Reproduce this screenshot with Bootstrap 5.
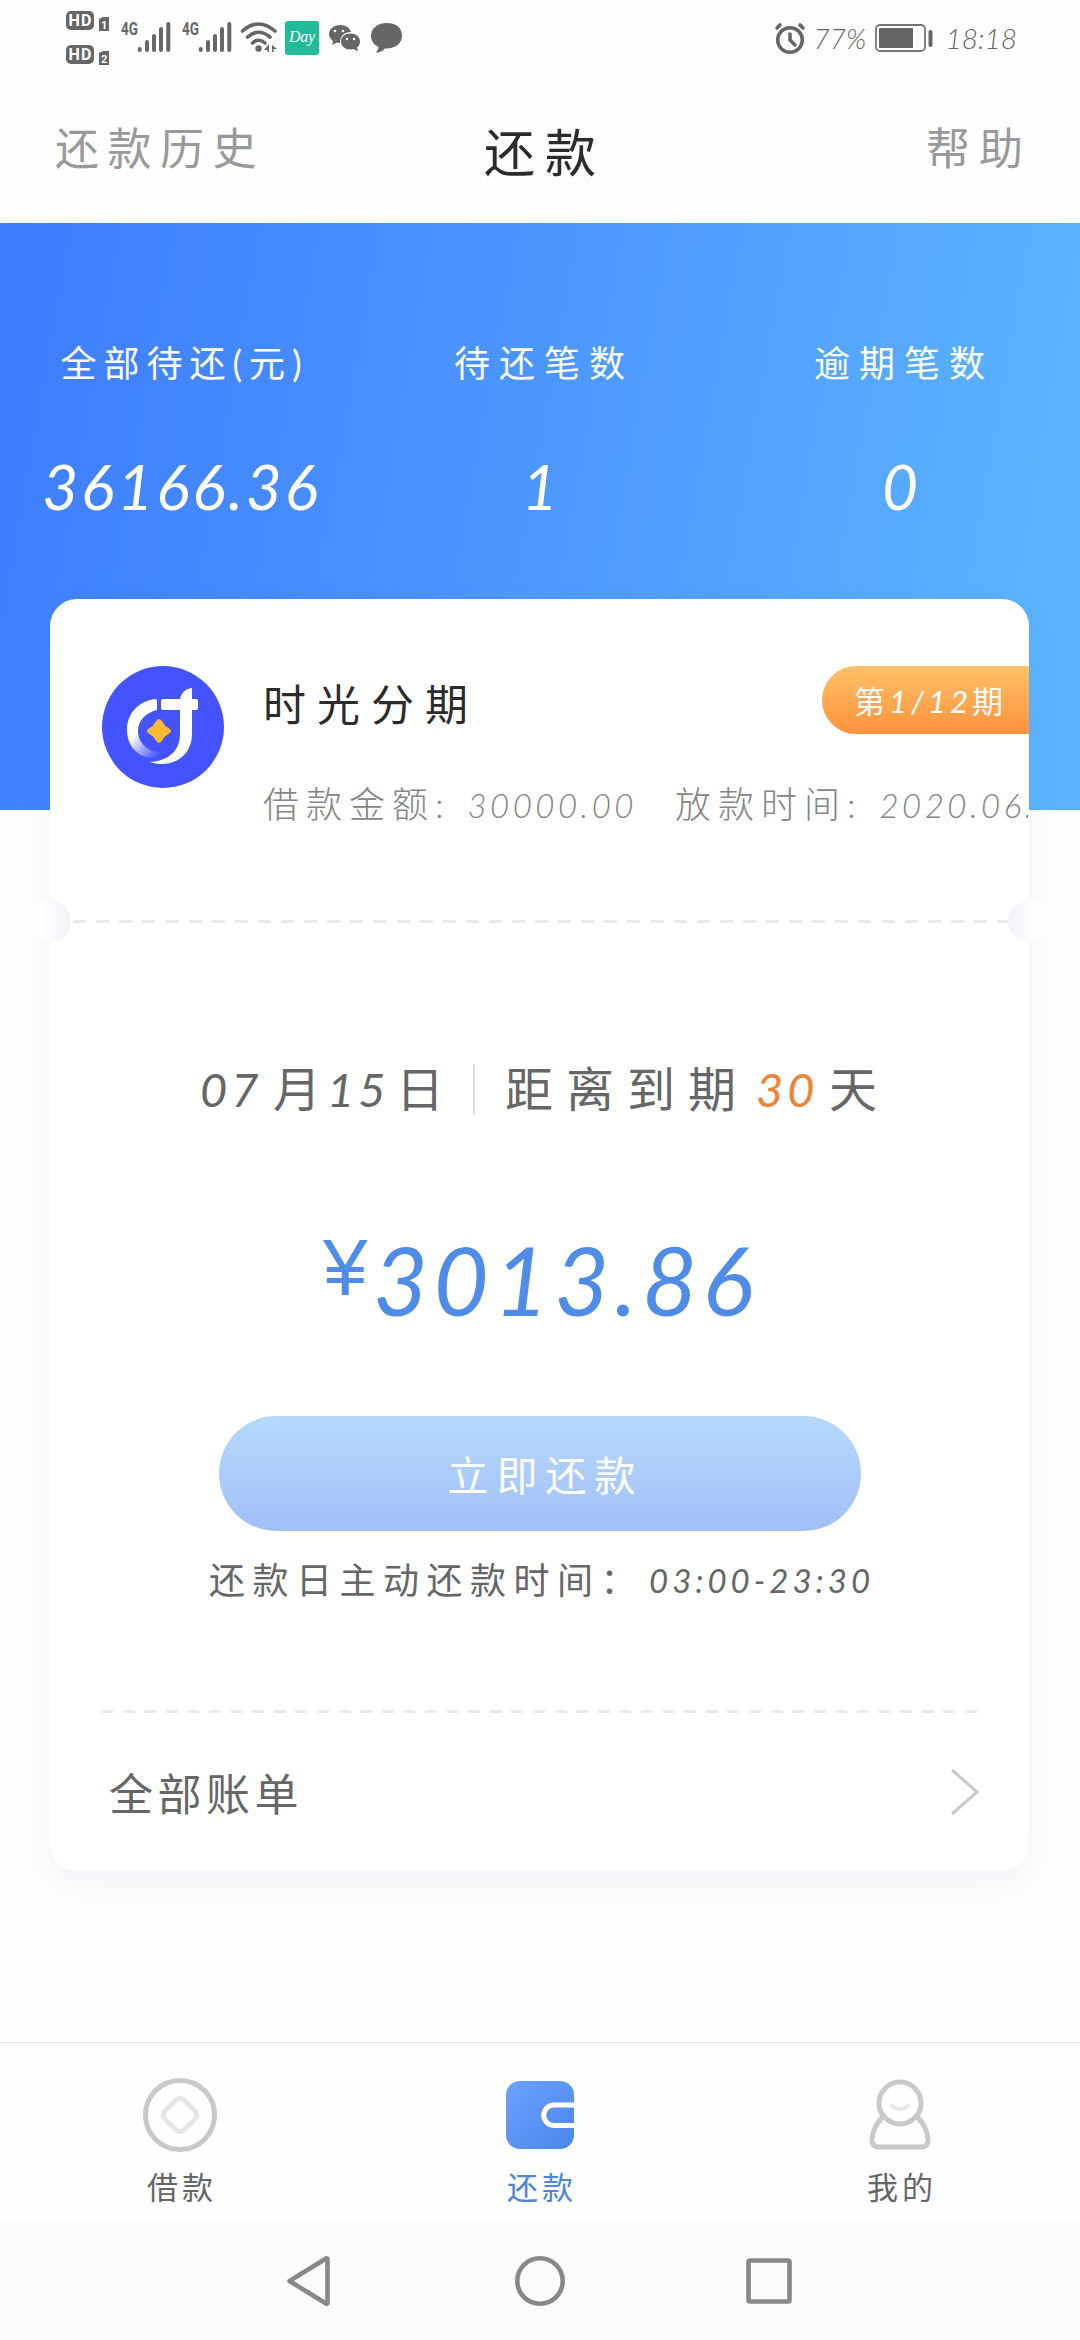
<!DOCTYPE html>
<html lang="zh-CN">
<head>
<meta charset="utf-8">
<meta name="viewport" content="width=device-width, initial-scale=1">
<title>还款</title>
<link href="https://cdn.jsdelivr.net/npm/bootstrap@5.3.0/dist/css/bootstrap.min.css" rel="stylesheet">
<style>
  body { font-family: Lato, "Noto Sans CJK SC", sans-serif; font-weight: 400; color: #666; background: #fefefe; width: 1080px; line-height: 1; overflow-x: hidden; }
  svg { display: block; flex: none; }
  .num { font-style: italic; }
  .status-bar { height: 76px; color: #666; }
  .status-left { padding-left: 65px; }
  .status-right { padding: 0 63px 0 0; font-size: 28px; font-weight: 300; }
  .battery-text { width: 69px; padding-left: 7px; }
  .clock-text { padding-left: 10px; }
  .app-header { height: 147px; color: #999; font-size: 44px; padding: 0 48px 0 55px; }
  .app-header > * { flex: 1 1 0; }
  .side-link { letter-spacing: 8.5px; padding-bottom: 3px; }
  .side-link.text-end { letter-spacing: 9px; }
  .page-title { font-size: 51px; letter-spacing: 10px; padding-left: 3px; padding-top: 5px; color: #2b2b2b; }
  .hero { height: 587px; background: linear-gradient(100deg, #3d7cff 0%, #4a93ff 42%, #5bb2ff 92%); color: #fff; }
  .stat-label { margin-top: 122px; height: 40px; font-size: 36px; letter-spacing: 9px; padding-left: 8px; }
  .stat-label.long { letter-spacing: 7px; padding-left: 9px; }
  .stat-num { margin-top: 70px; height: 73px; font-size: 62px; letter-spacing: 3px; padding-left: 3px; }
  .loan-card { width: 979px; height: 1272px; margin: -211px 0 0 50px; border: 0; border-radius: 27px; box-shadow: 0 12px 30px rgba(90,120,170,.09); }
  .loan-head { height: 321px; padding: 67px 0 0 52px; overflow: hidden; }
  .loan-text { padding-left: 39px; }
  .loan-name { font-size: 43px; letter-spacing: 11px; color: #2b2b2b; padding-top: 9px; }
  .term-pill { width: 207px; height: 68px; border-radius: 34px 0 0 34px; background: linear-gradient(#ffc168, #ff913d); color: #fff; font-size: 31px; letter-spacing: 4px; padding-left: 32px; padding-top: 2px; }
  .loan-meta { font-size: 36px; letter-spacing: 7px; color: #858585; width: 765px; overflow: hidden; margin-top: 44px; height: 52px; font-weight: 300; }
  .loan-meta .num { font-size: 33px; letter-spacing: 3.5px; }
  .meta-date { padding-left: 38px; }
  .dash-row { height: 3px; background: repeating-linear-gradient(90deg, #e9e9ea 0 13px, transparent 13px 23.1px); }
  .dash-row.lower { width: 878px; background: repeating-linear-gradient(90deg, #ebebeb 0 12px, transparent 12px 21.6px); }
  .notch { top: 301px; width: 42px; height: 42px; border-radius: 50%; }
  .notch-l { left: -21px; background: linear-gradient(90deg, #fefefe 30%, #f1f3f8); }
  .notch-r { right: -21px; background: linear-gradient(270deg, #fefefe 30%, #f1f3f8); }
  .due-row { height: 60px; margin-top: 136px; font-size: 48px; padding-left: 150px; }
  .due-row .num { font-size: 47px; letter-spacing: 4px; }
  .due-day { width: 73px; }
  .due-month { width: 54px; }
  .due-fifteen { width: 69px; }
  .due-sun { width: 77px; }
  .due-left { width: 281px; padding-left: 30px; letter-spacing: 13px; }
  .due-count { color: #ee8337; width: 73px; }
  .due-rule { width: 2px; height: 51px; background: #dedede; }
  .amount-row { height: 90px; margin-top: 115px; color: #4f8ce8; padding-left: 273px; }
  .yuan { font: 400 80px/80px "Liberation Sans", sans-serif; margin-top: -6px; width: 50px; }
  .amount { font-size: 95px; line-height: 90px; letter-spacing: 5.3px; }
  .pay-btn { width: 642px; height: 115px; border: 0; border-radius: 58px; background: linear-gradient(#b5d9fc, #a2bff8); color: #fff; font-size: 41px; letter-spacing: 8px; margin-top: 92px; padding: 4px 0 0 12px; }
  .pay-note { font-size: 36px; letter-spacing: 7.5px; height: 50px; margin-top: 24px; padding-left: 159px; }
  .pay-note-text { width: 440px; }
  .pay-note .num { font-size: 33px; letter-spacing: 4px; }
  .bill-row { height: 158px; padding: 0 50px 0 59px; font-size: 44px; letter-spacing: 4.5px; }
  .tab-bar { height: 180px; margin-top: 171px; border-top: 1px solid #e0e0e0; font-size: 31px; letter-spacing: 4px; }
  .tab-bar > a { flex: 1; padding-top: 34px; color: #666; text-decoration: none; }
  .tab-bar > a.active { color: #4d86d8; }
  .tab-label { margin-top: 15px; padding-left: 4px; }
  .sys-nav { height: 118px; background: #fbfbfb; padding-left: 283px; }
  .svg-label { font-family: Roboto, sans-serif; font-weight: 700; }
</style>
</head>
<body>
<div class="status-bar d-flex justify-content-between">
  <div class="status-left">
    <svg width="340" height="76" viewBox="65 0 340 76" fill="#666">
      <rect x="66" y="11" width="28" height="19" rx="5"/><rect x="66" y="45" width="28" height="19" rx="5"/>
      <g class="svg-label" font-size="16" fill="#fff"><text x="68.500" y="26.300" textLength="23">HD</text><text x="68.500" y="60.300" textLength="23">HD</text></g>
      <path d="M99 19l4-2h6v14H99zM99 53l4-2h6v14H99z"/>
      <g class="svg-label" font-size="11" fill="#fff"><text x="101" y="29">1</text><text x="101" y="63">2</text></g>
      <g class="svg-label" font-size="18"><text x="121" y="35" textLength="17" lengthAdjust="spacingAndGlyphs">4G</text><text x="182" y="35" textLength="17" lengthAdjust="spacingAndGlyphs">4G</text></g>
      <g stroke="#666" stroke-width="4" stroke-linecap="round"><path d="M139.700 49v1M147 42v8M154 36v14M161 29v21M168.300 24v26M200.700 49v1M208 42v8M215 36v14M222 29v21M229.300 24v26"/></g>
      <g fill="none" stroke="#666" stroke-width="3.600" stroke-linecap="round"><path d="M242.500 31Q258.500 17 275 31M247.500 37Q258.500 27.500 270 37M252.500 43Q258.500 37.500 265 43"/></g>
      <circle cx="258.500" cy="48.500" r="3.200"/><path d="M264 50l5-6v8h-1.500v-2zM272 45l5 4h-3.500v3H272z"/>
      <rect x="285" y="21" width="34" height="34" rx="3" fill="#22bb99"/>
      <text x="289" y="42" font-family="Liberation Serif" font-style="italic" font-size="16" textLength="26" fill="#fff">Day</text>
      <path d="M340 25c-6 0-11 4-11 9 0 3 2 5.500 4 7l-1 4 5-2.500q1.500.5 3 .5c0-7 4-11 11-11-1-4-5-7-11-7z"/>
      <path d="M350.500 33.500c-5.500 0-9.500 3.500-9.500 8s4 8 9.500 8l3-.5 4.500 2.500-1-4c2-1.500 3-3.500 3-6 0-4.500-4-8-9.500-8z"/>
      <g fill="#fff"><circle cx="335" cy="31" r="1.300"/><circle cx="343" cy="31" r="1.300"/><circle cx="347" cy="39" r="1.200"/><circle cx="354" cy="39" r="1.200"/></g>
      <path d="M386.500 23c-9 0-15.500 5.500-15.500 12.500 0 5.500 3 9 7.500 11.500 0 2-1 4-3 5.500 5 0 7.500-2 9.500-4 10 .5 17-5 17-13S395.500 23 386.500 23z"/>
    </svg>
  </div>
  <div class="status-right d-flex align-items-center">
    <svg width="32" height="34" viewBox="0 0 32 34" fill="none" stroke="#666" stroke-width="3.600" stroke-linecap="round"><circle cx="16" cy="19" r="12.300"/><path d="M16 13v6l5 5M3 7l3-3M29 7l-3-3"/></svg>
    <span class="num battery-text">77%</span>
    <svg width="60" height="30" viewBox="0 0 60 30"><rect x="1" y="2" width="49" height="26" rx="4" fill="none" stroke="#777" stroke-width="1.800"/><rect x="4" y="5" width="34" height="20" rx="1" fill="#666"/><rect x="53.500" y="7" width="4" height="17" rx="2" fill="#666"/></svg>
    <span class="num clock-text">18:18</span>
  </div>
</div>
<header class="app-header d-flex align-items-center">
  <span class="side-link">还款历史</span>
  <span class="page-title text-center">还款</span>
  <span class="side-link text-end">帮助</span>
</header>
<main>
  <section class="hero">
    <div class="row g-0 text-center">
      <div class="col-4"><div class="stat-label long">全部待还(元)</div><div class="stat-num num">36166.36</div></div>
      <div class="col-4"><div class="stat-label">待还笔数</div><div class="stat-num num">1</div></div>
      <div class="col-4"><div class="stat-label">逾期笔数</div><div class="stat-num num">0</div></div>
    </div>
  </section>
  <section class="card loan-card">
    <div class="loan-head d-flex">
      <svg width="122" height="122" viewBox="0 0 122 122">
        <defs><linearGradient id="tail" x1="0" y1="0" x2=".7" y2="1"><stop offset=".5" stop-color="#fff"/><stop offset="1" stop-color="#fff" stop-opacity="0"/></linearGradient></defs>
        <circle cx="61" cy="61" r="61" fill="#4353ff"/>
        <path d="M55 35v9C43 47 36 55 36 65c0 14 14 25 30 20-4 5-10 7-15 7C36 92 25 80 25 64c0-17 12-29 28-31q2 0 2 2z" fill="url(#tail)"/>
        <path d="M59 35q0-2 2-2h17c1-6 5-10 12-11v11h4q2 0 2 2v7q0 2-2 2h-4v24c0 18-13 30-30 30-5 0-9-1-12-2 18-1 30-11 30-28V44H61q-2 0-2-2z" fill="#fff"/>
        <path d="M57 53q2 0 3.500 3 2 4 6 6 5 3 0 6-4 2-6 6-3.500 6-7 0-2-4-6-6-5-3 0-6 4-2 6-6 1.500-3 3.500-3z" fill="#ffba30"/>
      </svg>
      <div class="loan-text flex-grow-1 overflow-hidden">
        <div class="d-flex justify-content-between">
          <div class="loan-name d-flex align-items-center">时光分期</div>
          <div class="term-pill d-flex align-items-center"><span>第<span class="num">1/12</span>期</span></div>
        </div>
        <div class="loan-meta d-flex align-items-center text-nowrap"><span>借款金额: <span class="num">30000.00</span></span><span class="meta-date">放款时间: <span class="num">2020.06.</span></span></div>
      </div>
    </div>
    <div class="dash-row"></div>
    <i class="notch notch-l position-absolute"></i><i class="notch notch-r position-absolute"></i>
    <div class="due-row d-flex align-items-center text-nowrap">
      <span class="num due-day">07</span><span class="due-month">月</span><span class="num due-fifteen">15</span><span class="due-sun">日</span>
      <i class="due-rule"></i>
      <span class="due-left">距离到期</span><span class="num due-count">30</span><span>天</span>
    </div>
    <div class="amount-row d-flex"><span class="yuan">¥</span><span class="amount num">3013.86</span></div>
    <button type="button" class="btn pay-btn align-self-center">立即还款</button>
    <div class="pay-note d-flex align-items-center text-nowrap"><span class="pay-note-text">还款日主动还款时间：</span><span class="num">03:00-23:30</span></div>
    <div class="dash-row lower align-self-center mt-auto"></div>
    <div class="bill-row d-flex align-items-center justify-content-between">
      <span class="pt-1">全部账单</span>
      <svg width="28" height="46" viewBox="0 0 28 46" fill="none" stroke="#c9c9c9" stroke-width="3"><path d="M1 1l25 22L1 45"/></svg>
    </div>
  </section>
</main>
<nav class="tab-bar d-flex text-center">
  <a href="#">
    <svg class="mx-auto" width="80" height="80" viewBox="0 0 80 80" fill="none"><circle cx="40" cy="38" r="34.500" stroke="#c8c8c8" stroke-width="5"/><rect x="26.500" y="24.500" width="27" height="27" rx="6" transform="rotate(45 40 38)" stroke="#e6e6e6" stroke-width="5"/></svg>
    <div class="tab-label">借款</div>
  </a>
  <a href="#" class="active">
    <svg class="mx-auto" width="80" height="80" viewBox="0 0 80 80"><defs><linearGradient id="wal" x1="0" y1="0" x2="1" y2="1"><stop stop-color="#6ba2ff"/><stop offset="1" stop-color="#4a86ea"/></linearGradient></defs><rect x="6" y="4" width="68" height="68" rx="14" fill="url(#wal)"/><path d="M74 28H54a10.200 10.200 0 0 0 0 20.500h20" fill="none" stroke="#fff" stroke-width="5"/></svg>
    <div class="tab-label">还款</div>
  </a>
  <a href="#">
    <svg class="mx-auto" width="80" height="80" viewBox="0 0 80 80" fill="none" stroke="#c8c9cb" stroke-width="5"><circle cx="40" cy="26" r="21"/><path d="M23 40C15 47 12 57 12 63q0 7 7 7h42q7 0 7-7c0-6-3-16-11-23"/><path d="M32 29q8 6 16 0" stroke="#e6e7e9" stroke-linecap="round" stroke-width="4"/></svg>
    <div class="tab-label">我的</div>
  </a>
</nav>
<div class="sys-nav d-flex align-items-center">
  <svg width="514" height="60" viewBox="283 2251 514 60" fill="none" stroke="#888" stroke-width="4.600" stroke-linejoin="round"><path d="M289.500 2281l36.500-22.500q1.500-.5 1.500 1v43q0 1.500-1.500 1z"/><circle cx="540" cy="2281" r="22.700"/><rect x="748.500" y="2260.500" width="41" height="41" rx="1.500"/></svg>
</div>
<script src="https://cdn.jsdelivr.net/npm/bootstrap@5.3.0/dist/js/bootstrap.bundle.min.js"></script>
</body>
</html>
